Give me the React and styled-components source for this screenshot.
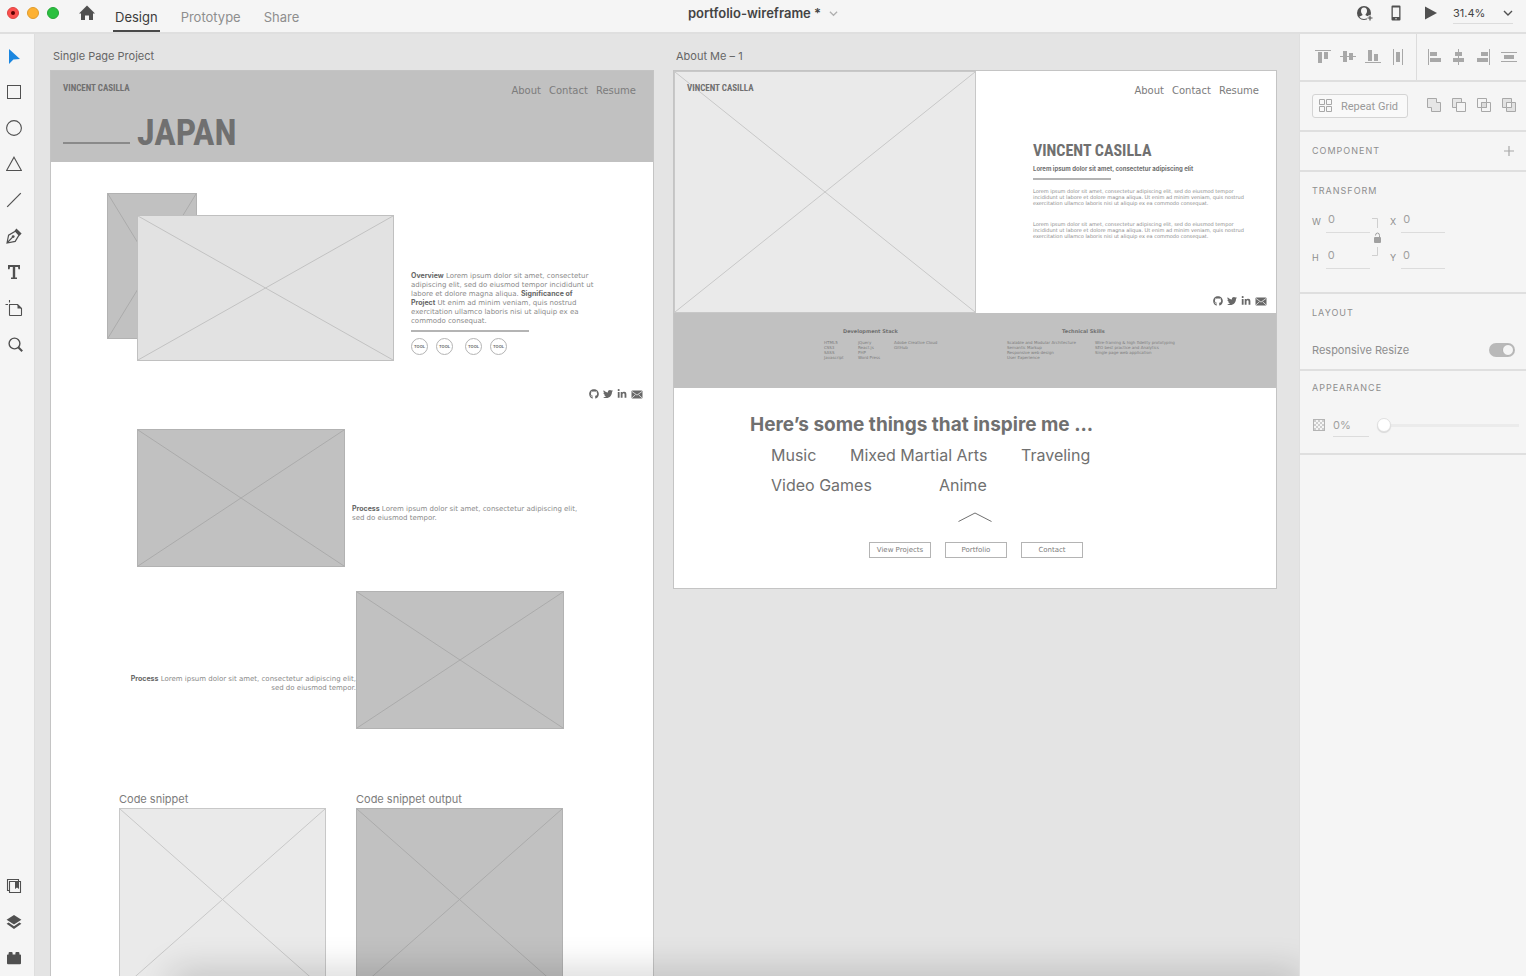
import React from "react";
import styled, { createGlobalStyle, css } from "styled-components";
import { FaGithub, FaTwitter, FaLinkedinIn } from "react-icons/fa";

const ui = `Inter, "Open Sans", sans-serif`;
const wide = `"DejaVu Sans", Inter, sans-serif`;
const condensed = `"Liberation Sans Narrow", "Roboto Condensed", "DejaVu Sans Condensed", sans-serif`;

const GlobalStyle = createGlobalStyle`
  *, *::before, *::after { box-sizing: border-box; }
  body { margin: 0; background: #e4e4e4; font-family: ${ui}; color: #707070; }
  h1, h2, h3, p, ul { margin: 0; padding: 0; }
  ul { list-style: none; }
  button, input, select { font: inherit; color: inherit; margin: 0; padding: 0; border: 0; background: none; border-radius: 0; }
  a { color: inherit; text-decoration: none; }
  svg { display: block; flex: none; }
`;

/* ---------- window frame ---------- */

const Window = styled.div`
  display: flex;
  flex-direction: column;
  height: 100vh;
  overflow: hidden;
`;

const TopBar = styled.header`
  display: grid;
  grid-template-columns: 1fr auto 1fr;
  height: 34px;
  flex: none;
  background: #f5f5f5;
  border-bottom: 2px solid #dfdfdf;
`;

const TopLeft = styled.div`
  display: flex;
  align-items: flex-start;
  padding-left: 7px;
`;

const Lights = styled.div`
  display: flex;
  gap: 8px;
  padding-top: 7px;
`;

const Light = styled.button`
  display: grid;
  place-items: center;
  width: 12px;
  height: 12px;
  border-radius: 50%;
  background: ${(p) => p.$fill};
  border: 1px solid ${(p) => p.$edge};
  &::after {
    content: "";
    width: 4px;
    height: 4px;
    border-radius: 50%;
    background: ${(p) => p.$dot || "transparent"};
  }
`;

const HomeButton = styled.button`
  margin: 5px 0 0 20px;
  color: #505050;
`;

const Tabs = styled.nav`
  display: flex;
  gap: 19px;
  margin-left: 18px;
`;

const Tab = styled.button`
  height: 32px;
  padding: 3px 2px 0;
  font-size: 13px;
  line-height: 16px;
  color: ${(p) => (p.$active ? "#3c3c3c" : "#8e8e8e")};
  border-bottom: 2px solid ${(p) => (p.$active ? "#4a4a4a" : "transparent")};
`;

const FileTitle = styled.button`
  display: flex;
  align-items: center;
  gap: 8px;
  height: 26px;
  font-size: 13px;
  font-weight: 600;
  color: #444;
`;

const TopRight = styled.div`
  display: flex;
  justify-content: flex-end;
  align-items: flex-start;
  padding: 4px 13px 0 0;
  color: #505050;
`;

const TopAction = styled.button`
  display: grid;
  place-items: center;
  height: 18px;
  margin-right: ${(p) => p.$after}px;
`;

const ZoomBox = styled.div`
  display: flex;
  align-items: center;
  width: 60px;
  height: 20px;
  padding-bottom: 2px;
  border-bottom: 1px solid #dcdcdc;
`;

const ZoomSelect = styled.select`
  flex: 1;
  min-width: 0;
  appearance: none;
  font-size: 11px;
  line-height: 16px;
  color: #444;
`;

const Body = styled.div`
  display: flex;
  flex: 1;
  min-height: 0;
`;

const ToolRail = styled.aside`
  display: flex;
  flex-direction: column;
  justify-content: space-between;
  flex: none;
  width: 35px;
  padding-top: 4px;
  background: #f5f5f5;
  border-right: 1px solid #dedede;
`;

const ToolGroup = styled.div`
  display: flex;
  flex-direction: column;
`;

const Tool = styled.button`
  display: grid;
  place-items: center;
  width: 28px;
  height: 36px;
  color: ${(p) => (p.$active ? "#1a86e0" : "#505050")};
`;

/* ---------- canvas ---------- */

const Canvas = styled.main`
  position: relative;
  display: flex;
  align-items: flex-start;
  gap: 19px;
  flex: 1;
  min-width: 0;
  overflow: hidden;
  padding: 14px 0 0 15px;
  background: #e4e4e4;
`;

const BottomShade = styled.div`
  position: absolute;
  left: 140px;
  right: 0;
  top: 100%;
  height: 20px;
  box-shadow: 0 0 36px 4px rgba(0, 0, 0, 0.2);
`;

const ArtboardColumn = styled.section`
  flex: none;
`;

const ArtboardName = styled.h2`
  padding-left: 3px;
  margin-bottom: 6px;
  font-size: 11px;
  line-height: 16px;
  font-weight: 400;
  color: #666;
`;

const Artboard = styled.div`
  width: 604px;
  background: #fff;
  border: 1px solid #c4c4c4;
`;

const Box = styled.div`
  display: flex;
  flex: none;
  width: ${(p) => p.$w}px;
  height: ${(p) => p.$h}px;
  background: ${(p) => p.$fill};
  border: 1px solid ${(p) => p.$edge};
`;

const tones = {
  dark: ["#c1c1c1", "#b2b2b2", "#ababab"],
  mid: ["#e2e2e2", "#c0c0c0", "#c2c2c2"],
  light: ["#eaeaea", "#c8c8c8", "#c8c8c8"],
};

function Placeholder({ w, h, tone, className }) {
  const [fill, edge, line] = tones[tone];
  return (
    <Box className={className} $w={w} $h={h} $fill={fill} $edge={edge}>
      <svg width="100%" height="100%" stroke={line}>
        <line x1="0" y1="0" x2="100%" y2="100%" />
        <line x1="100%" y1="0" x2="0" y2="100%" />
      </svg>
    </Box>
  );
}

const Hero = styled.div`
  height: 91px;
  padding: 0 17px 0 12px;
  background: #c1c1c1;
`;

const SiteBar = styled.div`
  display: flex;
  justify-content: space-between;
`;

const Brand = styled.a`
  font-family: ${condensed};
  font-weight: 700;
  font-size: 9px;
  line-height: 34px;
  color: #707070;
`;

const SiteNav = styled.nav`
  display: flex;
  justify-content: flex-end;
  gap: 8px;
  padding-top: 12px;
  font-family: ${wide};
  font-size: 10px;
  line-height: 16px;
  color: #7c7c7c;
`;

const HeroTitleRow = styled.div`
  display: flex;
  align-items: flex-end;
  gap: 7px;
  height: 48px;
`;

const HeroRule = styled.div`
  width: 67px;
  height: 2px;
  margin-bottom: 9px;
  background: #8a8a8a;
`;

const HeroTitle = styled.h1`
  font-family: ${condensed};
  font-size: 36px;
  line-height: 40px;
  font-weight: 700;
`;

const Overview = styled.div`
  display: flex;
  gap: 17px;
  padding: 31px 0 0 56px;
`;

const Stack = styled.div`
  display: grid;
  width: 287px;
  height: 168px;
  & > * { grid-area: 1 / 1; }
`;

const FrontPlaceholder = styled(Placeholder)`
  place-self: end;
`;

const OverviewCopy = styled.div`
  padding-top: 79px;
`;

const Small = styled.p`
  font-family: ${wide};
  font-size: 7px;
  line-height: 9px;
  color: #8a8a8a;
  white-space: nowrap;
  strong { font-family: ${ui}; font-weight: 700; line-height: 1px; color: #666; }
`;

const Rule = styled.div`
  width: ${(p) => p.$w}px;
  height: 2px;
  background: #b4b4b4;
`;

const ToolsRow = styled.div`
  display: flex;
  gap: 12px;
  margin-top: 6px;
`;

const OverviewRule = styled(Rule)`
  margin-top: 4px;
`;

const ToolsPair = styled.div`
  display: flex;
  gap: 8px;
`;

const ToolBadge = styled.span`
  display: grid;
  place-items: center;
  width: 17px;
  height: 17px;
  border: 1px solid #b4b4b4;
  border-radius: 50%;
  font-size: 4px;
  line-height: 5px;
  font-weight: 700;
`;

const SocialRow = styled.div`
  display: flex;
  justify-content: flex-end;
  align-items: center;
  gap: 4px;
  height: 12px;
  color: #686868;
`;

const OverviewSocials = styled(SocialRow)`
  margin-top: 27px;
  padding-right: 10px;
`;

const Process = styled.div`
  display: flex;
  gap: 7px;
  padding-left: 86px;
  margin-top: 29px;
  ${Small} { margin-top: 76px; }
  ${(p) =>
    p.$reverse &&
    css`
      gap: 0;
      padding-left: 0;
      margin-top: 24px;
      ${Small} { width: 305px; margin-top: 84px; text-align: right; }
    `}
`;

const CodeRow = styled.div`
  display: flex;
  gap: 30px;
  padding: 63px 0 40px 68px;
`;

const CodeLabel = styled.h3`
  margin-bottom: 2px;
  font-size: 11px;
  line-height: 14px;
  font-weight: 400;
  color: #7c7c7c;
`;

/* ---------- second artboard ---------- */

const AboutHero = styled.div`
  display: flex;
  height: 242px;
`;

const AboutImage = styled.div`
  display: grid;
  & > * { grid-area: 1 / 1; }
  & > a { padding-left: 13px; justify-self: start; align-self: start; }
`;

const AboutSide = styled.div`
  display: flex;
  flex-direction: column;
  flex: 1;
  padding-bottom: 6px;
  & > nav { padding-right: 17px; }
  & > div:last-child { margin-top: auto; padding-right: 9px; }
`;

const Bio = styled.div`
  padding: 38px 0 0 57px;
`;

const BioName = styled.h1`
  font-family: ${condensed};
  font-size: 16px;
  line-height: 28px;
  font-weight: 700;
`;

const BioLead = styled.p`
  margin-bottom: 5px;
  font-size: 6px;
  line-height: 8px;
  font-weight: 700;
  white-space: nowrap;
`;

const BioText = styled.p`
  margin: 8px 0 15px;
  font-family: ${wide};
  font-size: 5px;
  line-height: 6px;
  color: #8a8a8a;
  white-space: nowrap;
`;

const SkillBand = styled.div`
  display: flex;
  gap: 64px;
  height: 75px;
  padding: 15px 0 0 150px;
  background: #c1c1c1;
`;

const SkillGroup = styled.div`
  width: ${(p) => p.$w}px;
`;

const SkillTitle = styled.h3`
  margin-bottom: 5px;
  padding-left: ${(p) => p.$indent}px;
  font-family: ${wide};
  font-size: 5px;
  line-height: 7px;
  font-weight: 700;
  white-space: nowrap;
`;

const SkillColumns = styled.div`
  display: grid;
  grid-template-columns: ${(p) => p.$columns};
`;

const SkillList = styled.ul`
  font-family: ${wide};
  font-size: 4px;
  line-height: 5px;
  color: #7c7c7c;
  white-space: nowrap;
`;

const Inspire = styled.div`
  padding: 24px 195px 30px 76px;
`;

const InspireTitle = styled.h2`
  font-size: 19px;
  line-height: 26px;
  font-weight: 700;
  white-space: nowrap;
`;

const Interests = styled.ul`
  display: grid;
  grid-template-columns: 79px 89px 82px 72px;
  padding: 2px 0 0 21px;
  font-size: 16px;
  line-height: 30px;
  white-space: nowrap;
`;

const Interest = styled.li`
  grid-column: ${(p) => p.$col};
`;

const UpLink = styled.a`
  display: block;
  width: 34px;
  margin: 12px 0 0 208px;
`;

const LinkRow = styled.div`
  display: flex;
  gap: 14px;
  margin: 20px 0 0 119px;
`;

const OutlineButton = styled.button`
  flex: none;
  width: 62px;
  height: 16px;
  border: 1px solid #b4b4b4;
  font-family: ${wide};
  font-size: 7px;
  line-height: 9px;
  color: #7c7c7c;
`;

/* ---------- property panel ---------- */

const Panel = styled.aside`
  flex: none;
  width: 227px;
  background: #f5f5f5;
  border-left: 1px solid #dfdfdf;
  color: #8e8e8e;
`;

const Section = styled.section`
  height: ${(p) => p.$h}px;
  padding: ${(p) => p.$pad || "0 10px 0 12px"};
  border-bottom: 2px solid #dfdfdf;
`;

const SectionRow = styled(Section)`
  display: flex;
  align-items: center;
  justify-content: space-between;
`;

const IconSet = styled.div`
  display: flex;
  align-items: center;
  align-self: stretch;
  gap: 9px;
  padding: ${(p) => p.$pad || "0"};
  border-left: ${(p) => (p.$divided ? "1px solid #dcdcdc" : "0")};
`;

const IconButton = styled.button`
  display: grid;
  place-items: center;
  width: 16px;
  height: 16px;
  color: #a8a8a8;
`;

const RepeatButton = styled.button`
  display: flex;
  align-items: center;
  gap: 8px;
  height: 24px;
  width: 96px;
  padding-left: 6px;
  border: 1px solid #d4d4d4;
  border-radius: 3px;
  background: #f9f9f9;
  font-family: Roboto, sans-serif;
  font-size: 11px;
  color: #9a9a9a;
  white-space: nowrap;
`;

const SectionTitle = styled.h3`
  font-size: 9px;
  line-height: 12px;
  font-weight: 400;
  letter-spacing: 1px;
  text-transform: uppercase;
`;

const TransformGrid = styled.div`
  display: grid;
  grid-template-columns: 58px 20px 55px;
  grid-template-rows: 24px 24px;
  row-gap: 12px;
  margin-top: 12px;
`;

const LinkCell = styled.div`
  grid-area: 1 / 2 / 3 / 3;
  padding: 9px 0 0 2px;
`;

const Field = styled.label`
  display: flex;
  align-items: center;
  gap: ${(p) => p.$gap}px;
  grid-column: ${(p) => p.$col};
  font-size: 9px;
`;

const TextInput = styled.input`
  flex: 1;
  min-width: 0;
  height: 24px;
  padding: 0 0 4px 2px;
  border-bottom: 1px solid #dcdcdc;
  font-size: 11px;
  color: #a0a0a0;
  outline: 0;
`;

const PercentInput = styled(TextInput)`
  padding: 0;
`;

const ToggleRow = styled.label`
  display: flex;
  align-items: center;
  justify-content: space-between;
  margin-top: 24px;
  font-size: 11px;
  line-height: 14px;
`;

const Toggle = styled.input`
  appearance: none;
  display: flex;
  justify-content: flex-end;
  width: 26px;
  height: 14px;
  padding: 1px;
  border-radius: 7px;
  background: #b9b9b9;
  &::after {
    content: "";
    width: 12px;
    height: 12px;
    border: 1px solid #b0b0b0;
    border-radius: 50%;
    background: #f5f5f5;
  }
`;

const OpacityRow = styled.div`
  display: flex;
  align-items: center;
  margin: 19px -3px 0 1px;
`;

const OpacityField = styled.label`
  display: flex;
  align-items: center;
  gap: 8px;
  width: 56px;
`;

const Slider = styled.input`
  appearance: none;
  flex: 1;
  min-width: 0;
  height: 14px;
  margin-left: 8px;
  outline: 0;
  &::-webkit-slider-runnable-track {
    height: 3px;
    background: #ebebeb;
  }
  &::-webkit-slider-thumb {
    appearance: none;
    width: 14px;
    height: 14px;
    margin-top: -6px;
    border-radius: 50%;
    background: #fff;
    border: 1px solid #e0e0e0;
    box-shadow: 0 1px 1px rgba(0, 0, 0, 0.12);
  }
`;

/* ---------- icons ---------- */

const Icon = ({ size = 16, w, h, children, ...rest }) => (
  <svg
    width={w || size}
    height={h || size}
    viewBox={`0 0 ${w || size} ${h || size}`}
    fill="none"
    stroke="currentColor"
    aria-hidden="true"
    {...rest}
  >
    {children}
  </svg>
);

const solid = { fill: "currentColor", stroke: "none" };

const tools = [
  ["Select", <Icon {...solid}><path d="M3 1v15l4.400-4.400L14 11z" /></Icon>],
  ["Rectangle", <Icon><rect x="1.5" y="1.5" width="13" height="13" strokeWidth="1" /></Icon>],
  ["Ellipse", <Icon><circle cx="8" cy="8" r="7.400" strokeWidth="1.100" /></Icon>],
  ["Polygon", <Icon><path d="M8 1.200 15.400 14.500H.6z" strokeWidth="1.100" /></Icon>],
  ["Line", <Icon><path d="M1.200 14.800 14.800 1.200" strokeWidth="1.200" /></Icon>],
  [
    "Pen",
    <Icon>
      <path d="M1 15 2.600 7.200 9.300 3.200 13 7 9.200 13.400zM1 15l5.600-5.800" strokeWidth="1.200" />
      <circle cx="7.200" cy="8.600" r="1.400" fill="currentColor" stroke="none" />
      <path d="M10.400.6 15.600 5.400 13.600 7.800 8.600 2.800z" fill="currentColor" stroke="none" />
    </Icon>,
  ],
  [
    "Text",
    <Icon {...solid}>
      <path d="M2 1h12v4.200h-1.600L12 3H9.200v10.400H11V15H5v-1.600h1.800V3H4l-.4 2.200H2z" />
    </Icon>,
  ],
  [
    "Artboard",
    <Icon w={18} h={18}>
      <path d="M4.500 5.500h8l4 4v6.500q0 .5-.5.5H5q-.5 0-.5-.5zM.5 5.500H3M4.500 1v2.500" strokeWidth="1.100" />
      <path d="M12.500 5v4.500H17z" fill="currentColor" stroke="none" />
    </Icon>,
  ],
  [
    "Zoom",
    <Icon w={18} h={18}>
      <circle cx="9.500" cy="8.500" r="5.400" strokeWidth="1.400" />
      <path d="m13.200 12.300 4 4" strokeWidth="2" />
    </Icon>,
  ],
];

const panels = [
  [
    "Libraries",
    <Icon>
      <path d="M3 12.500H1.500v-11h11V3M3.500 3.500h11v11h-11z" strokeWidth="1.100" />
      <path d="M9 3.500h4V11l-2-1.600L9 11z" fill="currentColor" stroke="none" />
    </Icon>,
  ],
  [
    "Layers",
    <Icon {...solid}>
      <path d="m8 1 7.400 4.800L8 10.600.6 5.800z" />
      <path d="M2.600 8.400.6 9.800 8 15l7.400-5.200-2-1.400L8 12.200z" />
    </Icon>,
  ],
  [
    "Plugins",
    <Icon {...solid}>
      <path d="M2.600 4.400V3q0-1 1-1h2q1 0 1 1v1.400h2.800V3q0-1 1-1h2q1 0 1 1v1.400h.8q.8 0 .8.8v8q0 1-1 1H2q-1 0-1-1v-8q0-.8.8-.8z" />
    </Icon>,
  ],
];

const alignVertical = [
  ["Align top", <Icon {...solid}><path d="M0 1h16v1H0zM3 3h4v11H3zM9 3h4v7H9z" /></Icon>],
  ["Align middle", <Icon {...solid}><path d="M0 7h16v1H0zM3 2h4v11H3zM9 4h4v7H9z" /></Icon>],
  ["Align bottom", <Icon {...solid}><path d="M0 13h16v1H0zM3 1h4v11H3zM9 5h4v7H9z" /></Icon>],
  ["Distribute horizontally", <Icon {...solid}><path d="M3 0h1v16H3zM12 0h1v16h-1zM6 3h4v10H6z" /></Icon>],
];

const alignHorizontal = [
  ["Align left", <Icon {...solid}><path d="M2 0h1v16H2zM4 3h7v4H4zM4 9h11v4H4z" /></Icon>],
  ["Align centre", <Icon {...solid}><path d="M7 0h1v16H7zM4 3h7v4H4zM2 9h11v4H2z" /></Icon>],
  ["Align right", <Icon {...solid}><path d="M13 0h1v16h-1zM5 3h7v4H5zM1 9h11v4H1z" /></Icon>],
  ["Distribute vertically", <Icon {...solid}><path d="M0 3h16v1H0zM0 12h16v1H0zM3 6h10v4H3z" /></Icon>],
];

const booleans = [
  ["Add", <Icon><path d="M1.500.5h9v4h4v9h-9v-4h-4z" fill="#e6e6e6" /></Icon>],
  ["Subtract", <Icon><path d="M1.500.5h9v4h-5v5h-4z" fill="#e6e6e6" /><path d="M5.500 4.500h9v9h-9z" /></Icon>],
  ["Intersect", <Icon><path d="M1.500.5h9v9h-9z" /><path d="M5.500 4.500h9v9h-9z" /><path d="M5.500 4.500h5v5h-5z" fill="#dcdcdc" /></Icon>],
  ["Exclude overlap", <Icon><path d="M1.500.5h9v9h-9zM5.500 4.500h9v9h-9z" fill="#e2e2e2" /><path d="M5.500 4.500h5v5h-5z" fill="#f5f5f5" /></Icon>],
];

const checks = [0, 2, 4, 6, 8].flatMap((y, row) =>
  (row % 2 ? [2, 6] : [0, 4, 8]).map((x) => `M${x + 1} ${y + 1}h2v2h-2z`)
).join("");

const Chevron = ({ size = 10, ...rest }) => (
  <Icon size={size} {...rest} viewBox="0 0 10 10" strokeWidth="1.4">
    <path d="m1 3 4 4 4-4" />
  </Icon>
);

const Mail = () => (
  <Icon w={12} h={9} {...solid}>
    <rect x=".5" y=".5" width="11" height="8" rx="1" />
    <path d="m1 1.500 5 3.600 5-3.600M1 7.800l3.400-3M11 7.800l-3.400-3" fill="none" stroke="#fff" strokeWidth=".7" />
  </Icon>
);

const socials = (
  <>
    <a href="#github" aria-label="GitHub"><FaGithub size={10} /></a>
    <a href="#twitter" aria-label="Twitter"><FaTwitter size={10} /></a>
    <a href="#linkedin" aria-label="LinkedIn"><FaLinkedinIn size={10} /></a>
    <a href="#mail" aria-label="Mail"><Mail /></a>
  </>
);

const siteLinks = ["About", "Contact", "Resume"].map((name) => (
  <a key={name} href={`#${name.toLowerCase()}`}>{name}</a>
));

/* ---------- artboards ---------- */

function ProjectArtboard() {
  return (
    <ArtboardColumn>
      <ArtboardName>Single Page Project</ArtboardName>
      <Artboard>
        <Hero>
          <SiteBar>
            <Brand href="#home">VINCENT CASILLA</Brand>
            <SiteNav>{siteLinks}</SiteNav>
          </SiteBar>
          <HeroTitleRow>
            <HeroRule />
            <HeroTitle>JAPAN</HeroTitle>
          </HeroTitleRow>
        </Hero>
        <Overview>
          <Stack>
            <Placeholder w={90} h={146} tone="dark" />
            <FrontPlaceholder w={257} h={146} tone="mid" />
          </Stack>
          <OverviewCopy>
            <Small>
              <strong>Overview</strong> Lorem ipsum dolor sit amet, consectetur
              <br />
              adipiscing elit, sed do eiusmod tempor incididunt ut
              <br />
              labore et dolore magna aliqua. <strong>Significance of</strong>
              <br />
              <strong>Project</strong> Ut enim ad minim veniam, quis nostrud
              <br />
              exercitation ullamco laboris nisi ut aliquip ex ea
              <br />
              commodo consequat.
            </Small>
            <OverviewRule $w={118} />
            <ToolsRow>
              <ToolsPair><ToolBadge>TOOL</ToolBadge><ToolBadge>TOOL</ToolBadge></ToolsPair>
              <ToolsPair><ToolBadge>TOOL</ToolBadge><ToolBadge>TOOL</ToolBadge></ToolsPair>
            </ToolsRow>
          </OverviewCopy>
        </Overview>
        <OverviewSocials>{socials}</OverviewSocials>
        <Process>
          <Placeholder w={208} h={138} tone="dark" />
          <Small>
            <strong>Process</strong> Lorem ipsum dolor sit amet, consectetur adipiscing elit,
            <br />
            sed do eiusmod tempor.
          </Small>
        </Process>
        <Process $reverse>
          <Small>
            <strong>Process</strong> Lorem ipsum dolor sit amet, consectetur adipiscing elit,
            <br />
            sed do eiusmod tempor.
          </Small>
          <Placeholder w={208} h={138} tone="dark" />
        </Process>
        <CodeRow>
          <div>
            <CodeLabel>Code snippet</CodeLabel>
            <Placeholder w={207} h={183} tone="light" />
          </div>
          <div>
            <CodeLabel>Code snippet output</CodeLabel>
            <Placeholder w={207} h={183} tone="dark" />
          </div>
        </CodeRow>
      </Artboard>
    </ArtboardColumn>
  );
}

const Lorem = () => (
  <BioText>
    Lorem ipsum dolor sit amet, consectetur adipiscing elit, sed do eiusmod tempor
    <br />
    incididunt ut labore et dolore magna aliqua. Ut enim ad minim veniam, quis nostrud
    <br />
    exercitation ullamco laboris nisi ut aliquip ex ea commodo consequat.
  </BioText>
);

const skills = [
  {
    title: "Development Stack",
    width: 119,
    indent: 19,
    tracks: "34px 36px auto",
    columns: [
      ["HTML5", "CSS3", "SASS", "Javascript"],
      ["jQuery", "React.js", "PHP", "Word Press"],
      ["Adobe Creative Cloud", "GitHub"],
    ],
  },
  {
    title: "Technical Skills",
    width: 177,
    indent: 55,
    tracks: "88px auto",
    columns: [
      ["Scalable and Modular Architecture", "Semantic Markup", "Responsive web design", "User Experience"],
      ["Wire-framing & high fidelity prototyping", "SEO best practice and Analytics", "Single page web application"],
    ],
  },
];

const interests = [
  ["Music", 1],
  ["Mixed Martial Arts", 2],
  ["Traveling", 4],
  ["Video Games", 1],
  ["Anime", 3],
];

function AboutArtboard() {
  return (
    <ArtboardColumn>
      <ArtboardName>About Me – 1</ArtboardName>
      <Artboard>
        <AboutHero>
          <AboutImage>
            <Placeholder w={302} h={242} tone="light" />
            <Brand href="#home">VINCENT CASILLA</Brand>
          </AboutImage>
          <AboutSide>
            <SiteNav>{siteLinks}</SiteNav>
            <Bio>
              <BioName>VINCENT CASILLA</BioName>
              <BioLead>Lorem ipsum dolor sit amet, consectetur adipiscing elit</BioLead>
              <Rule $w={78} />
              <Lorem />
              <Lorem />
            </Bio>
            <SocialRow>{socials}</SocialRow>
          </AboutSide>
        </AboutHero>
        <SkillBand>
          {skills.map((group) => (
            <SkillGroup key={group.title} $w={group.width}>
              <SkillTitle $indent={group.indent}>{group.title}</SkillTitle>
              <SkillColumns $columns={group.tracks}>
                {group.columns.map((items) => (
                  <SkillList key={items[0]}>
                    {items.map((item) => <li key={item}>{item}</li>)}
                  </SkillList>
                ))}
              </SkillColumns>
            </SkillGroup>
          ))}
        </SkillBand>
        <Inspire>
          <InspireTitle>Here’s some things that inspire me ...</InspireTitle>
          <Interests>
            {interests.map(([name, col]) => <Interest key={name} $col={col}>{name}</Interest>)}
          </Interests>
          <UpLink href="#top" aria-label="Back to top">
            <Icon w={34} h={10}><path d="M.5 9.500 17 1l16.500 8.500" /></Icon>
          </UpLink>
          <LinkRow>
            <OutlineButton>View Projects</OutlineButton>
            <OutlineButton>Portfolio</OutlineButton>
            <OutlineButton>Contact</OutlineButton>
          </LinkRow>
        </Inspire>
      </Artboard>
    </ArtboardColumn>
  );
}

/* ---------- property panel ---------- */

const iconButtons = (list) =>
  list.map(([name, icon]) => <IconButton key={name} aria-label={name}>{icon}</IconButton>);

function PropertyPanel() {
  return (
    <Panel>
      <SectionRow $h={48} $pad="0 9px 0 15px">
        <IconSet>{iconButtons(alignVertical)}</IconSet>
        <IconSet $divided $pad="0 0 0 9px">{iconButtons(alignHorizontal)}</IconSet>
      </SectionRow>
      <SectionRow $h={50} $pad="0 9px 0 12px">
        <RepeatButton>
          <Icon size={14} color="#a8a8a8">
            <path d="M.5.5h5v5h-5zM7.500.5h5v5h-5zM.5 7.500h5v5h-5zM7.500 7.500h5v5h-5z" />
          </Icon>
          Repeat Grid
        </RepeatButton>
        <IconSet>{iconButtons(booleans)}</IconSet>
      </SectionRow>
      <SectionRow $h={40} $pad="0 9px 0 12px">
        <SectionTitle>Component</SectionTitle>
        <IconButton aria-label="Add component">
          <Icon size={10} strokeWidth="1.2"><path d="M5 0v10M0 5h10" /></Icon>
        </IconButton>
      </SectionRow>
      <Section $h={122} $pad="13px 12px 0">
        <SectionTitle>Transform</SectionTitle>
        <TransformGrid>
          <Field $col={1} $gap={5}>W<TextInput defaultValue="0" /></Field>
          <Field $col={3} $gap={5}>X<TextInput defaultValue="0" /></Field>
          <LinkCell>
            <Icon w={10} h={40}>
              <path d="M0 .5h5.500V10M5.500 29v8.500H0" stroke="#cfcfcf" />
              <rect x="2" y="19" width="7" height="6" rx="1" fill="#a0a0a0" stroke="none" />
              <path d="M3.500 17.500q0-2.500 2-2.500t2 2.500V19" stroke="#a0a0a0" />
            </Icon>
          </LinkCell>
          <Field $col={1} $gap={7}>H<TextInput defaultValue="0" /></Field>
          <Field $col={3} $gap={5}>Y<TextInput defaultValue="0" /></Field>
        </TransformGrid>
      </Section>
      <Section $h={77} $pad="13px 11px 0 12px">
        <SectionTitle>Layout</SectionTitle>
        <ToggleRow>
          Responsive Resize
          <Toggle type="checkbox" role="switch" defaultChecked />
        </ToggleRow>
      </Section>
      <Section $h={84} $pad="11px 10px 0 12px">
        <SectionTitle>Appearance</SectionTitle>
        <OpacityRow>
          <OpacityField aria-label="Opacity">
            <Icon size={12} color="#b4b4b4">
              <rect x=".5" y=".5" width="11" height="11" />
              <path d={checks} fill="#cecece" stroke="none" />
            </Icon>
            <PercentInput defaultValue="0%" />
          </OpacityField>
          <Slider type="range" defaultValue="0" aria-label="Opacity" />
        </OpacityRow>
      </Section>
    </Panel>
  );
}

export default function App() {
  return (
    <>
      <GlobalStyle />
      <Window>
        <TopBar>
          <TopLeft>
            <Lights>
              <Light aria-label="Close" $fill="#fc4f4d" $edge="#de4543" $dot="#5c0000" />
              <Light aria-label="Minimise" $fill="#fdb132" $edge="#e09c2c" />
              <Light aria-label="Full screen" $fill="#2ac03f" $edge="#25a637" />
            </Lights>
            <HomeButton aria-label="Home">
              <Icon {...solid}><path d="M8 .6 16 8.400h-2V15h-4v-4.600H6V15H2V8.400H0z" /></Icon>
            </HomeButton>
            <Tabs>
              <Tab $active>Design</Tab>
              <Tab>Prototype</Tab>
              <Tab>Share</Tab>
            </Tabs>
          </TopLeft>
          <FileTitle>
            portfolio-wireframe *
            <Chevron size={9} color="#b0b0b0" />
          </FileTitle>
          <TopRight>
            <TopAction aria-label="Share with people" $after={18}>
              <Icon w={17} h={16}>
                <circle cx="8" cy="8" r="7" fill="currentColor" stroke="none" />
                <path d="M8 2.600c2 0 3 1.500 3 3.400 0 1.600-.7 2.700-1.400 3.300v1l3.200 1.500Q11 14 8 14t-4.800-2.200l3.200-1.500v-1C5.700 8.700 5 7.600 5 6c0-1.900 1-3.400 3-3.400z" fill="#f5f5f5" stroke="none" />
                <path d="M14 10v6M11 13h6" stroke="#f5f5f5" strokeWidth="3" />
                <path d="M14 10.500v5M11.500 13h5" strokeWidth="1.200" />
              </Icon>
            </TopAction>
            <TopAction aria-label="Device preview" $after={24}>
              <Icon w={10} h={16} {...solid}>
                <path fillRule="evenodd" d="M1.500.5h7q1 0 1 1v13q0 1-1 1h-7q-1 0-1-1v-13q0-1 1-1zM1.800 2.500v9.500h6.400V2.500z" />
                <circle cx="5" cy="13.700" r=".7" fill="#f5f5f5" />
              </Icon>
            </TopAction>
            <TopAction aria-label="Play" $after={16}>
              <Icon w={12} h={14} {...solid}><path d="M0 .5v13L12 7z" /></Icon>
            </TopAction>
            <ZoomBox>
              <ZoomSelect aria-label="Zoom level" defaultValue="31.4%">
                <option>31.4%</option>
                <option>100%</option>
              </ZoomSelect>
              <Chevron />
            </ZoomBox>
          </TopRight>
        </TopBar>
        <Body>
          <ToolRail>
            <ToolGroup>
              {tools.map(([name, icon], i) => (
                <Tool key={name} aria-label={name} $active={i === 0}>{icon}</Tool>
              ))}
            </ToolGroup>
            <ToolGroup>
              {panels.map(([name, icon]) => <Tool key={name} aria-label={name}>{icon}</Tool>)}
            </ToolGroup>
          </ToolRail>
          <Canvas>
            <ProjectArtboard />
            <AboutArtboard />
            <BottomShade />
          </Canvas>
          <PropertyPanel />
        </Body>
      </Window>
    </>
  );
}
